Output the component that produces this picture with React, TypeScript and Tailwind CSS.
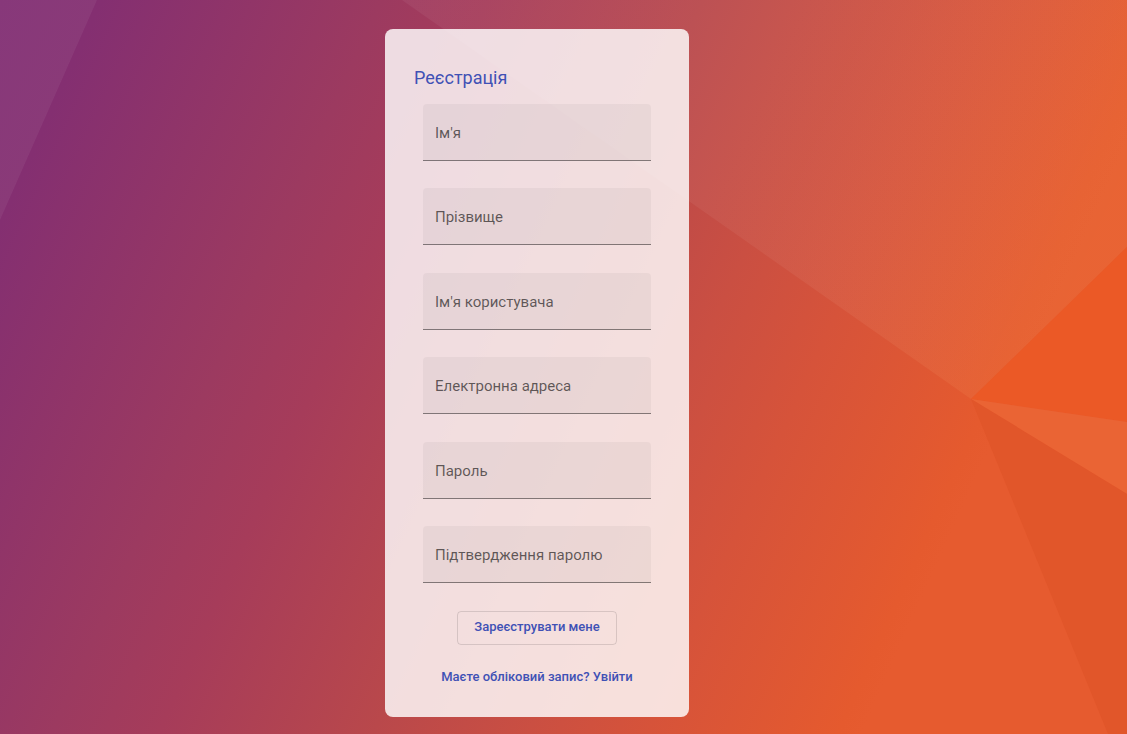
const fields = [
  { id: "firstName", label: "Ім'я", type: "text" },
  { id: "lastName", label: "Прізвище", type: "text" },
  { id: "username", label: "Ім'я користувача", type: "text" },
  { id: "email", label: "Електронна адреса", type: "email" },
  { id: "password", label: "Пароль", type: "password" },
  { id: "confirm", label: "Підтвердження паролю", type: "password" },
];

function Backdrop() {
  return (
    <svg
      className="absolute inset-0 -z-10 h-full w-full"
      viewBox="0 0 1127 734"
      preserveAspectRatio="xMidYMid slice"
      aria-hidden="true"
    >
      <defs>
        <linearGradient id="base" gradientUnits="userSpaceOnUse" x1="0" y1="0" x2="991" y2="446">
          <stop offset="0" stopColor="#812d73" />
          <stop offset="0.085" stopColor="#842f71" />
          <stop offset="0.32" stopColor="#9c3a60" />
          <stop offset="0.41" stopColor="#a63c5a" />
          <stop offset="0.59" stopColor="#b9484b" />
          <stop offset="0.72" stopColor="#ca4f42" />
          <stop offset="0.82" stopColor="#d6533a" />
          <stop offset="0.98" stopColor="#e55a2e" />
          <stop offset="1" stopColor="#e65b2f" />
        </linearGradient>
        <linearGradient id="veil" gradientUnits="userSpaceOnUse" x1="400" y1="0" x2="1065" y2="300">
          <stop offset="0" stopColor="#ffffff" stopOpacity="0.05" />
          <stop offset="0.6" stopColor="#ffffff" stopOpacity="0.05" />
          <stop offset="1" stopColor="#ffb060" stopOpacity="0.1" />
        </linearGradient>
      </defs>
      <rect width="1127" height="734" fill="url(#base)" />
      <path d="M0 0H97L0 220Z" fill="#ffffff" fillOpacity="0.055" />
      <path d="M402 0H1127V247L971 399Z" fill="url(#veil)" />
      <path d="M971 399L1127 247V422Z" fill="#eb5926" />
      <path d="M971 399L1127 422V494Z" fill="#ea6434" />
      <path d="M971 399L1127 494V734H1108Z" fill="#e1562a" />
    </svg>
  );
}

function Field({ id, label, type }: { id: string; label: string; type: string }) {
  return (
    <div className="relative">
      <input
        id={id}
        name={id}
        type={type}
        placeholder=" "
        className="peer block h-[57px] w-full rounded-t border-b border-black/45 bg-black/4 px-3 pt-4 text-[15px] text-black/85 outline-none focus:border-[#3f51b5]"
      />
      <label
        htmlFor={id}
        className="pointer-events-none absolute top-1 left-3 text-xs leading-6 text-black/60 peer-placeholder-shown:top-[17px] peer-placeholder-shown:text-[15px] peer-focus:top-1 peer-focus:text-xs"
      >
        {label}
      </label>
    </div>
  );
}

export default function App() {
  return (
    <main className="relative isolate flex min-h-screen items-start justify-center overflow-hidden bg-[#b94a4c] pt-[29px] pr-[53px] pb-4 font-['Roboto',sans-serif]">
      <Backdrop />
      <form
        className="w-full max-w-[304px] rounded-lg bg-white/82 px-[29px] pt-9 pb-[26px]"
        onSubmit={(e) => e.preventDefault()}
      >
        <h1 className="text-[18px] leading-[26px] text-[#3f51b5]">Реєстрація</h1>
        <div className="mt-[13px] flex min-h-[479px] flex-col justify-between px-[9px]">
          {fields.map((f) => (
            <Field key={f.id} {...f} />
          ))}
        </div>
        <div className="mt-7 flex flex-col items-center gap-[18px]">
          <button
            type="submit"
            className="h-[34px] rounded border border-black/12 px-4 pb-0.5 text-[13px] font-medium text-[#3f51b5]"
          >
            Зареєструвати мене
          </button>
          <a href="#login" className="text-[13px] leading-7 font-medium whitespace-nowrap text-[#3f51b5]">
            Маєте обліковий запис? Увійти
          </a>
        </div>
      </form>
    </main>
  );
}
